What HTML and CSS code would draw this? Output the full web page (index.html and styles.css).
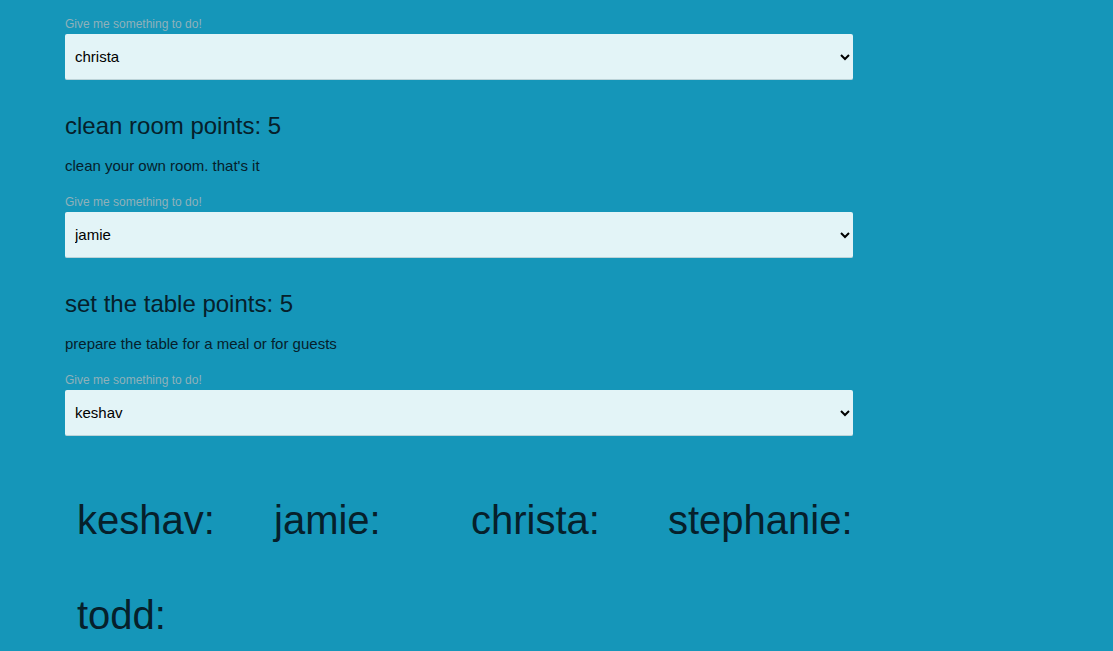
FILE: index.html
```html
<!DOCTYPE html>
<html>
<head>
<meta charset="utf-8">
<link rel="stylesheet" href="styles.css">
</head>
<body>
<div class="page">
  <div class="chore first">
    <label class="hint">Give me something to do!</label>
    <select class="assign"><option>christa</option></select>
  </div>
  <div class="chore">
    <h2 class="title">clean room points: 5</h2>
    <p class="desc">clean your own room. that's it</p>
    <label class="hint">Give me something to do!</label>
    <select class="assign"><option>jamie</option></select>
  </div>
  <div class="chore">
    <h2 class="title">set the table points: 5</h2>
    <p class="desc">prepare the table for a meal or for guests</p>
    <label class="hint">Give me something to do!</label>
    <select class="assign"><option>keshav</option></select>
  </div>
  <div class="people">
    <div class="person">keshav:</div>
    <div class="person">jamie:</div>
    <div class="person">christa:</div>
    <div class="person">stephanie:</div>
    <div class="person">todd:</div>
  </div>
</div>
</body>
</html>
```
FILE: styles.css
```css
html, body {
  margin: 0;
  padding: 0;
  background: #1596b9;
  height: 100%;
  overflow: hidden;
}
body {
  font-family: "Liberation Sans", Arial, sans-serif;
  color: #06202b;
}
.page {
  width: 788px;
  margin-left: 65px;
  padding-top: 16px;
}
.chore {
  display: flex;
  flex-direction: column;
}
.hint {
  display: block;
  font-size: 12px;
  line-height: 16px;
  color: #8fb1ba;
  margin-bottom: 2px;
}
.assign {
  display: block;
  width: 788px;
  height: 46px;
  border: none;
  border-radius: 2px;
  background: #e3f4f7;
  font-family: "Liberation Sans", Arial, sans-serif;
  font-size: 15px;
  color: #000;
  padding: 0 6px;
  border-bottom: 1px solid #bcd3d8;
}
.title {
  font-size: 24px;
  font-weight: normal;
  line-height: 28px;
  margin: 32px 0 0 0;
}
.desc {
  font-size: 15px;
  line-height: 20px;
  margin: 16px 0 18px 0;
}
.people {
  display: grid;
  grid-template-columns: repeat(4, 197px);
  margin-top: 37px;
}
.person {
  padding: 0 12px;
  font-size: 40px;
  line-height: 95px;
  white-space: nowrap;
}
```
